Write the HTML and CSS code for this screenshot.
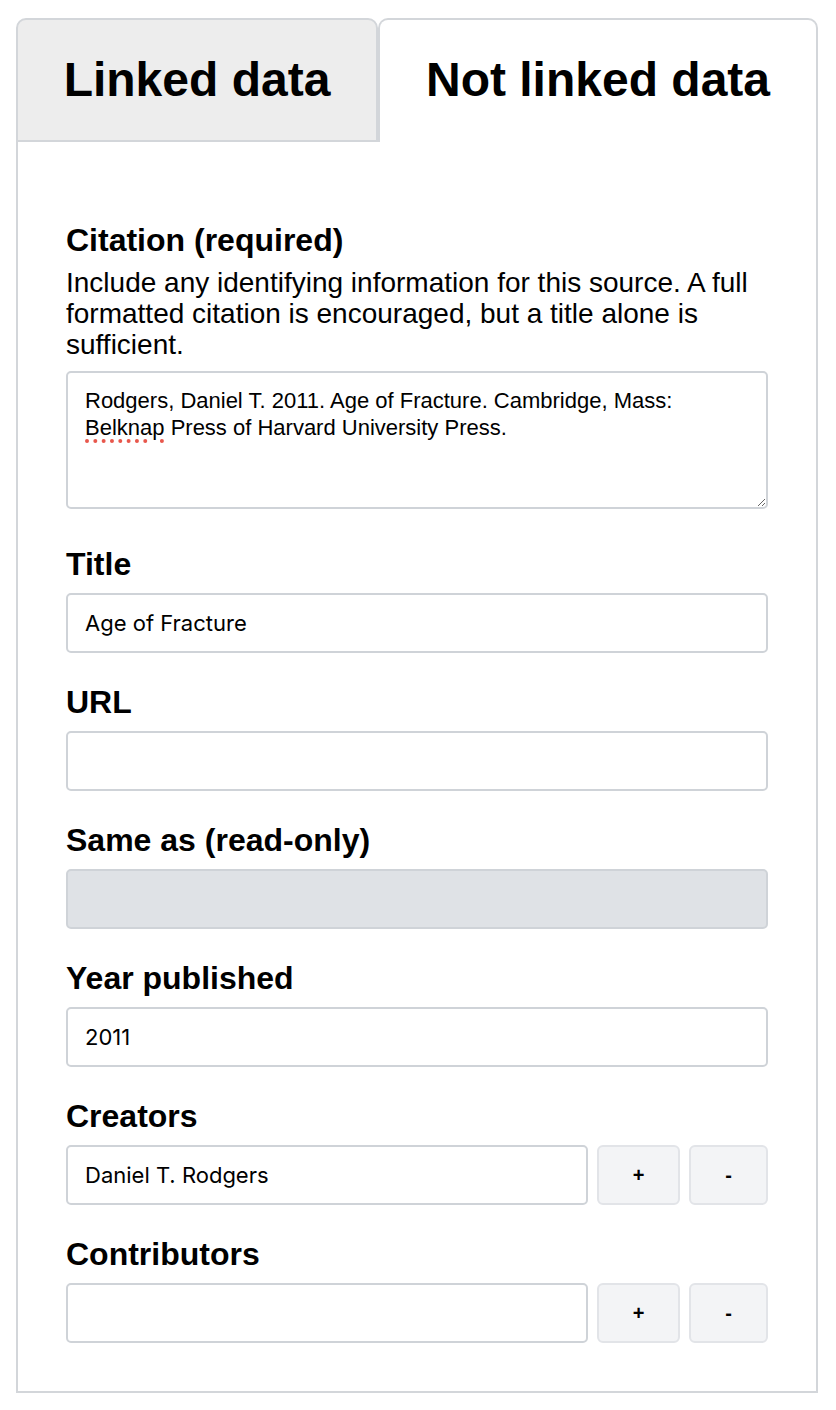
FILE: index.html
```html
<!DOCTYPE html>
<html lang="en">
<head>
  <meta charset="UTF-8" />
  <title>Source</title>
  <link rel="stylesheet" href="styles.css">
</head>
<body>
  <div class="container">
    <div class="tabs">
      <div class="tab">Linked data</div>
      <div class="tab active">Not linked data</div>
    </div>

    <div class="panel">
      <div class="field citation">
        <label>Citation (required)</label>
        <p class="hint">Include any identifying information for this source. A full formatted citation is encouraged, but a title alone is sufficient.</p>
        <div class="textarea" contenteditable="true" spellcheck="false">Rodgers, Daniel T. 2011. Age of Fracture. Cambridge, Mass: <span class="misspelled">Belknap</span> Press of Harvard University Press.</div>
      </div>

      <div class="field">
        <label for="title">Title</label>
        <input type="text" id="title" value="Age of Fracture">
      </div>

      <div class="field">
        <label for="url">URL</label>
        <input type="text" id="url">
      </div>

      <div class="field">
        <label for="sameAs">Same as (read-only)</label>
        <input type="text" id="sameAs" readonly>
      </div>

      <div class="field">
        <label for="year">Year published</label>
        <input type="text" id="year" value="2011">
      </div>

      <div class="field">
        <label>Creators</label>
        <div class="row">
          <input type="text" value="Daniel T. Rodgers">
          <button>+</button>
          <button>-</button>
        </div>
      </div>

      <div class="field">
        <label>Contributors</label>
        <div class="row">
          <input type="text">
          <button>+</button>
          <button>-</button>
        </div>
      </div>
    </div>
  </div>
</body>
</html>
```

FILE: styles.css
```css
body {
  margin: 0;
  font-family: "Liberation Sans", Arial, sans-serif;
  color: #000;
  background-color: #fff;
}

.container {
  width: 802px;
  margin: 18px 0 0 16px;
}

.tabs {
  display: flex;
}

.tab {
  width: 362px;
  box-sizing: border-box;
  padding: 32px 0;
  line-height: 56px;
  font-size: 48px;
  font-weight: bold;
  text-align: center;
  background-color: #ededed;
  border: 2px solid #d3d6da;
  border-radius: 10px 10px 0 0;
}

.tab.active {
  flex: 1;
  background-color: #fff;
  border-bottom: none;
}

.panel {
  border: 2px solid #d3d6da;
  border-top: none;
  padding: 80px 48px 48px;
}

.field {
  margin-bottom: 31px;
}

.field:last-child {
  margin-bottom: 0;
}

.field label {
  display: block;
  font-size: 32px;
  font-weight: bold;
  margin-bottom: 10px;
}

.citation {
  margin-bottom: 0;
}

.citation label {
  margin-bottom: 8px;
}

.hint {
  margin: 0 0 11px;
  font-size: 28px;
  line-height: 31px;
}

.textarea {
  box-sizing: border-box;
  height: 138px;
  padding: 14px 17px;
  border: 2px solid #cfd3d8;
  border-radius: 5px;
  font-size: 22px;
  line-height: 27px;
  resize: both;
  overflow: auto;
  outline: none;
  margin-bottom: 37px;
}

.misspelled {
  text-decoration: underline dotted #e8574c;
  text-decoration-thickness: 4px;
  text-underline-offset: 4px;
}

input[type="text"] {
  display: block;
  width: 100%;
  height: 60px;
  box-sizing: border-box;
  padding: 0 17px;
  border: 2px solid #cfd3d8;
  border-radius: 5px;
  font-family: Inter, "Noto Sans", sans-serif;
  font-size: 22px;
  color: #000;
  outline: none;
}

input[readonly] {
  background-color: #dfe2e6;
}

.row {
  display: flex;
  gap: 9px;
}

.row input[type="text"] {
  flex: 1;
}

.row button {
  height: 60px;
  padding: 0 34px;
  font-family: "Liberation Sans", Arial, sans-serif;
  font-size: 20px;
  font-weight: bold;
  color: #000;
  background-color: #f3f4f6;
  border: 2px solid #e2e4e8;
  border-radius: 6px;
  cursor: pointer;
}
```
